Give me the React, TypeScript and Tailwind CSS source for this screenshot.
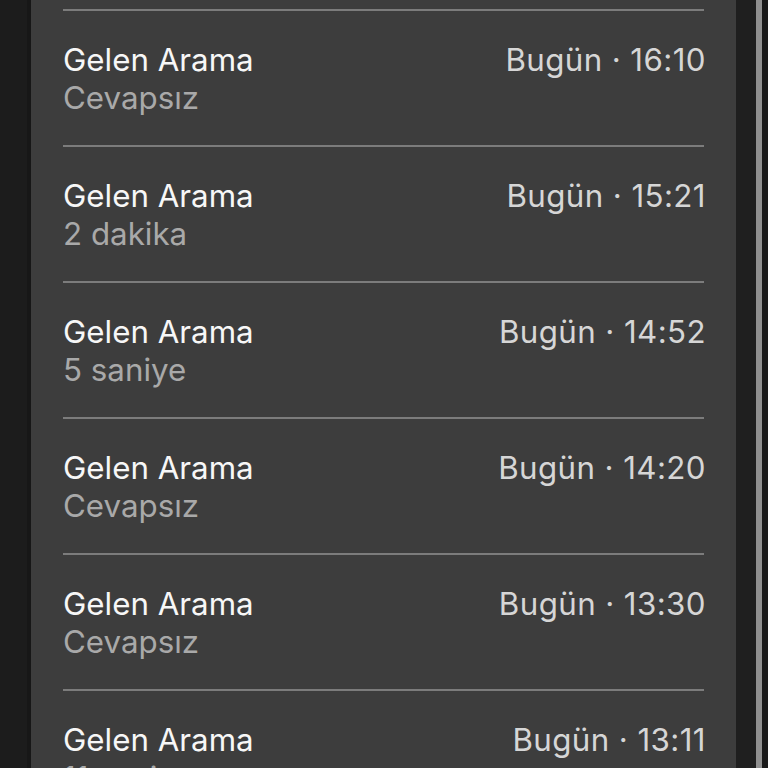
const calls = [
  { title: "Gelen Arama", detail: "Cevapsız", time: "Bugün · 16:10" },
  { title: "Gelen Arama", detail: "2 dakika", time: "Bugün · 15:21" },
  { title: "Gelen Arama", detail: "5 saniye", time: "Bugün · 14:52" },
  { title: "Gelen Arama", detail: "Cevapsız", time: "Bugün · 14:20" },
  { title: "Gelen Arama", detail: "Cevapsız", time: "Bugün · 13:30" },
  { title: "Gelen Arama", detail: "11 saniye", time: "Bugün · 13:11" },
];

function CallRow({ title, detail, time }: { title: string; detail: string; time: string }) {
  return (
    <li>
      <div className="h-[2px] bg-[#7c7c7c]" />
      <div className="flex justify-between pt-[30px] h-[134px]">
        <div className="flex flex-col">
          <span className="text-[31.3px] leading-[38px] text-[#f7f7f7]">{title}</span>
          <span className="text-[31.3px] leading-[38px] text-[#a9a9a9]">{detail}</span>
        </div>
        <span className="text-[31.3px] leading-[38px] tracking-[0.4px] text-[#d6d6d6] -mr-[2px]">{time}</span>
      </div>
    </li>
  );
}

export default function App() {
  return (
    <div
      className="flex h-[768px] w-[768px] overflow-hidden bg-[#1c1c1c]"
      style={{ fontFamily: "Inter, 'Noto Sans', sans-serif" }}
    >
      <div className="w-[27px] shrink-0 bg-[#1c1c1c]" />
      <div className="w-[4px] shrink-0 bg-[#171717]" />
      <section className="w-[705px] shrink-0 bg-[#3d3d3d] px-8 pt-[9px]">
        <ul>
          {calls.map((c, i) => (
            <CallRow key={i} {...c} />
          ))}
        </ul>
      </section>
      <div className="w-[20px] shrink-0 bg-[#1f1f1f]" />
      <div className="w-[6px] shrink-0 bg-[#8f8f8f]" />
      <div className="flex-1 bg-[#1a1a1a]" />
    </div>
  );
}
